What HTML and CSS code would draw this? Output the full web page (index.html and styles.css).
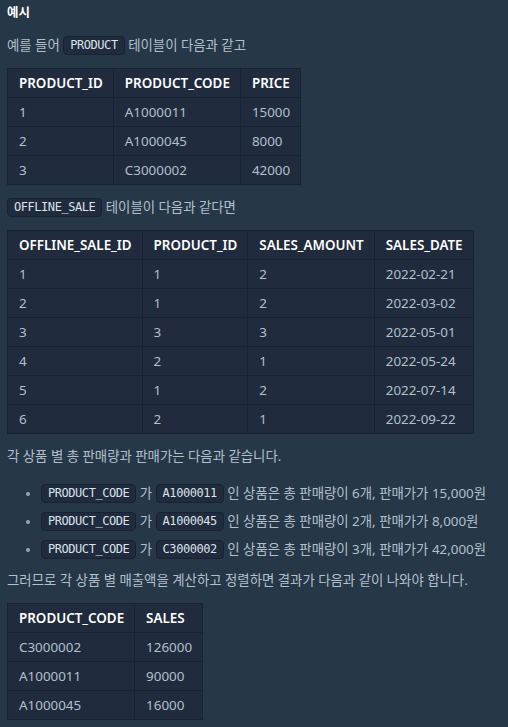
FILE: index.html
```html
<!DOCTYPE html>
<html lang="ko">
<head>
<meta charset="utf-8">
<link rel="stylesheet" href="styles.css">
</head>
<body>
<div class="content">
  <h5 class="title">예시</h5>
  <p class="para">예를 들어 <code class="chip">PRODUCT</code> 테이블이 다음과 같고</p>
  <table class="tbl">
    <thead><tr><th>PRODUCT_ID</th><th>PRODUCT_CODE</th><th>PRICE</th></tr></thead>
    <tbody>
      <tr><td>1</td><td>A1000011</td><td>15000</td></tr>
      <tr><td>2</td><td>A1000045</td><td>8000</td></tr>
      <tr><td>3</td><td>C3000002</td><td>42000</td></tr>
    </tbody>
  </table>
  <p class="para"><code class="chip">OFFLINE_SALE</code> 테이블이 다음과 같다면</p>
  <table class="tbl">
    <thead><tr><th>OFFLINE_SALE_ID</th><th>PRODUCT_ID</th><th>SALES_AMOUNT</th><th>SALES_DATE</th></tr></thead>
    <tbody>
      <tr><td>1</td><td>1</td><td>2</td><td>2022-02-21</td></tr>
      <tr><td>2</td><td>1</td><td>2</td><td>2022-03-02</td></tr>
      <tr><td>3</td><td>3</td><td>3</td><td>2022-05-01</td></tr>
      <tr><td>4</td><td>2</td><td>1</td><td>2022-05-24</td></tr>
      <tr><td>5</td><td>1</td><td>2</td><td>2022-07-14</td></tr>
      <tr><td>6</td><td>2</td><td>1</td><td>2022-09-22</td></tr>
    </tbody>
  </table>
  <p class="para">각 상품 별 총 판매량과 판매가는 다음과 같습니다.</p>
  <ul class="list">
    <li><code class="chip">PRODUCT_CODE</code> 가 <code class="chip">A1000011</code> 인 상품은 총 판매량이 6개, 판매가가 15,000원</li>
    <li><code class="chip">PRODUCT_CODE</code> 가 <code class="chip">A1000045</code> 인 상품은 총 판매량이 2개, 판매가가 8,000원</li>
    <li><code class="chip">PRODUCT_CODE</code> 가 <code class="chip">C3000002</code> 인 상품은 총 판매량이 3개, 판매가가 42,000원</li>
  </ul>
  <p class="para">그러므로 각 상품 별 매출액을 계산하고 정렬하면 결과가 다음과 같이 나와야 합니다.</p>
  <table class="tbl">
    <thead><tr><th>PRODUCT_CODE</th><th>SALES</th></tr></thead>
    <tbody>
      <tr><td>C3000002</td><td>126000</td></tr>
      <tr><td>A1000011</td><td>90000</td></tr>
      <tr><td>A1000045</td><td>16000</td></tr>
    </tbody>
  </table>
</div>
</body>
</html>
```
FILE: styles.css
```css
html, body {
  margin: 0;
  padding: 0;
  background: #263747;
}
body {
  font-family: "Noto Sans", "Noto Sans CJK KR", sans-serif;
  font-size: 13.4px;
  line-height: 22px;
  color: #b2c0cc;
}
.content {
  padding: 2px 7px 0;
}
.title {
  margin: 0 0 10px;
  font-size: 12.5px;
  font-weight: 700;
  color: #ffffff;
  line-height: 22px;
}
.para {
  margin: 0 0 12px;
}
.chip {
  font-family: "DejaVu Sans Mono", "Liberation Mono", monospace;
  font-size: 12px;
  letter-spacing: -0.45px;
  line-height: 17px;
  display: inline-block;
  padding: 0 6px 0 6px;
  background: #202b3d;
  border: 1px solid #172334;
  border-radius: 4px;
  color: #dbe2ea;
  vertical-align: 1px;
}
.tbl {
  border-collapse: collapse;
  background: #202b3d;
  margin: 0 0 11px;
}
.tbl th, .tbl td {
  border: 1px solid #172334;
  padding: 3px 10px 3px 11px;
  text-align: left;
  line-height: 22px;
  white-space: nowrap;
}
.tbl th {
  color: #ffffff;
  font-weight: 600;
}
.list {
  margin: 15px 0 9px;
  padding-left: 34px;
}
.list li + li {
  margin-top: 6px;
}
.list li::marker {
  color: #98a8b9;
  font-size: 11px;
}
```
